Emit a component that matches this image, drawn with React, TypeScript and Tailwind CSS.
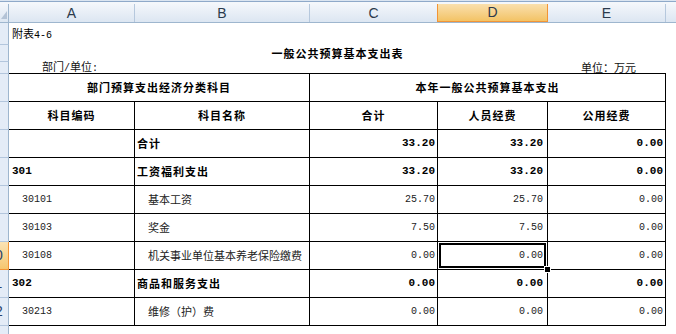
import React from "react";

type Row = {
  n: number;
  a: string;
  b: string;
  c: string;
  d: string;
  e: string;
  bold?: boolean;
  selected?: boolean;
};

const rows: Row[] = [
  { n: 6, a: "", b: "合计", c: "33.20", d: "33.20", e: "0.00", bold: true },
  { n: 7, a: "301", b: "工资福利支出", c: "33.20", d: "33.20", e: "0.00", bold: true },
  { n: 8, a: "30101", b: "基本工资", c: "25.70", d: "25.70", e: "0.00" },
  { n: 9, a: "30103", b: "奖金", c: "7.50", d: "7.50", e: "0.00" },
  { n: 10, a: "30108", b: "机关事业单位基本养老保险缴费", c: "0.00", d: "0.00", e: "0.00", selected: true },
  { n: 11, a: "302", b: "商品和服务支出", c: "0.00", d: "0.00", e: "0.00", bold: true },
  { n: 12, a: "30213", b: "维修（护）费", c: "0.00", d: "0.00", e: "0.00" },
];

const cjk = "font-['Noto_Sans_CJK_SC',sans-serif]";
const mono = "font-['Liberation_Mono',monospace]";

// only two-digit row numbers peek into the narrow row header
function RowHead({ n, h, active }: { n?: number; h: string; active?: boolean }) {
  return (
    <div
      className={`${h} w-[9px] shrink-0 flex items-center justify-end overflow-hidden border-r border-b ${
        active
          ? "bg-gradient-to-b from-[#fbe3b4] to-[#f5c66e] border-[#f29436]"
          : "bg-[#e4ecf7] border-r-[#9eb6ce] border-b-[#b3c6dd]"
      }`}
    >
      {n !== undefined && n >= 10 && (
        <span className="w-[26px] shrink-0 text-center font-['Liberation_Sans',sans-serif] text-[14px] text-[#27406b]">
          {n}
        </span>
      )}
    </div>
  );
}

function ColHead({ label, w, active }: { label: string; w: string; active?: boolean }) {
  return (
    <div
      className={`${w} h-full flex items-center justify-center border-r font-['Liberation_Sans',sans-serif] text-[14px] text-[#2c3a4c] ${
        active
          ? "bg-gradient-to-b from-[#fae0ad] to-[#f3c364] border-[#f29436] border-b border-l -ml-px"
          : "border-r-[#b6c8dd]"
      }`}
    >
      {label}
    </div>
  );
}

function Num({ v, bold }: { v: string; bold?: boolean }) {
  return (
    <span className={`${mono} ${bold ? "text-[11px] font-bold text-black" : "text-[10px] text-[#222]"}`}>{v}</span>
  );
}

export default function App() {
  return (
    <div className="w-[676px] h-[334px] overflow-hidden bg-white">
      {/* window chrome */}
      <div className="h-px bg-[#dbe5f1]"></div>
      <div className="h-px bg-[#8fa9c9]"></div>
      <div className="h-[2px] bg-[#f4f7fb]"></div>

      {/* column headers */}
      <div className="flex h-[19px] border-b border-[#9eb6ce] bg-gradient-to-b from-[#f3f6fb] to-[#dce6f2]">
        <div className="w-[9px] h-full border-r border-[#9eb6ce] flex items-end justify-end pb-[3px] pr-[1px]">
          <svg width="6" height="8" viewBox="0 0 6 8">
            <path d="M6 0 L6 8 L0 8 Z" fill="#b4c3d6" />
          </svg>
        </div>
        <ColHead label="A" w="w-[126px]" />
        <ColHead label="B" w="w-[175px]" />
        <ColHead label="C" w="w-[128px]" />
        <ColHead label="D" w="w-[111px]" active />
        <ColHead label="E" w="w-[118px]" />
        <div className="flex-1"></div>
      </div>

      {/* row 1 */}
      <div className="flex">
        <RowHead n={1} h="h-[22px]" />
        <div className="flex items-center pl-[3px]">
          <div className="leading-[14px] text-black whitespace-nowrap">
            <span className={`${cjk} text-[11px]`}>附表</span>
            <span className={`${mono} text-[10px]`}>4-6</span>
          </div>
        </div>
      </div>

      {/* row 2 */}
      <div className="flex">
        <RowHead n={2} h="h-[17px]" />
        <div className={`w-[657px] flex items-center justify-center ${cjk} text-[11px] font-bold tracking-[1px] text-black`}>
          一般公共预算基本支出表
        </div>
      </div>

      {/* row 3 */}
      <div className="flex">
        <RowHead n={3} h="h-[12px]" />
        <div className="w-[657px] h-[12px] flex items-center justify-between border-b border-black text-[11px] leading-[11px] text-[#111]">
          <div className="pl-[33px] whitespace-nowrap">
            <span className={cjk}>部门</span>
            <span className={`${mono} text-[10px]`}>/</span>
            <span className={cjk}>单位</span>
            <span className={`${mono} text-[10px]`}>:</span>
          </div>
          <div className={`${cjk} pr-[30px]`}>单位：万元</div>
        </div>
      </div>

      {/* table header row 4 */}
      <div className="flex">
        <RowHead n={4} h="h-[28px]" />
        <div className={`w-[301px] h-[28px] flex items-center justify-center border-r border-b border-black ${cjk} text-[11px] font-bold tracking-[1px] text-black`}>
          部门预算支出经济分类科目
        </div>
        <div className={`w-[356px] h-[28px] flex items-center justify-center border-r border-b border-black ${cjk} text-[11px] font-bold tracking-[1px] text-black`}>
          本年一般公共预算基本支出
        </div>
      </div>

      {/* table header row 5 */}
      <div className="flex">
        <RowHead n={5} h="h-[28px]" />
        {[
          ["w-[126px]", "科目编码"],
          ["w-[175px]", "科目名称"],
          ["w-[128px]", "合计"],
          ["w-[110px]", "人员经费"],
          ["w-[118px]", "公用经费"],
        ].map(([w, t]) => (
          <div
            key={t}
            className={`${w} h-[28px] flex items-center justify-center border-r border-b border-black ${cjk} text-[11px] font-bold tracking-[1px] text-black`}
          >
            {t}
          </div>
        ))}
      </div>

      {/* data rows */}
      {rows.map((r) => (
        <div key={r.n} className="flex">
          <RowHead n={r.n} h="h-[28px]" active={r.selected} />
          <div
            className={`w-[126px] h-[28px] flex items-center border-r border-b border-black ${
              r.bold ? "pl-[3px]" : "pl-[13px]"
            }`}
          >
            <Num v={r.a} bold={r.bold} />
          </div>
          <div
            className={`w-[175px] h-[28px] flex items-center border-r border-b border-black ${cjk} text-[11px] ${
              r.bold ? "pl-[2px] font-bold tracking-[1px] text-black" : "pl-[13px] text-[#222]"
            }`}
          >
            {r.b}
          </div>
          <div className="w-[128px] h-[28px] flex items-center justify-end pr-[2px] border-r border-b border-black">
            <Num v={r.c} bold={r.bold} />
          </div>
          <div className="relative w-[110px] h-[28px] flex items-center justify-end pr-[4px] border-r border-b border-black">
            <Num v={r.d} bold={r.bold} />
            {r.selected && (
              <>
                <div className="absolute inset-px border-2 border-black"></div>
                <div className="absolute z-10 right-[-4px] bottom-[-4px] w-[7px] h-[7px] bg-black border border-white"></div>
              </>
            )}
          </div>
          <div className="w-[118px] h-[28px] flex items-center justify-end pr-[2px] border-r border-b border-black">
            <Num v={r.e} bold={r.bold} />
          </div>
        </div>
      ))}

      {/* row 13 */}
      <div className="flex">
        <RowHead n={13} h="h-[28px]" />
      </div>
    </div>
  );
}
